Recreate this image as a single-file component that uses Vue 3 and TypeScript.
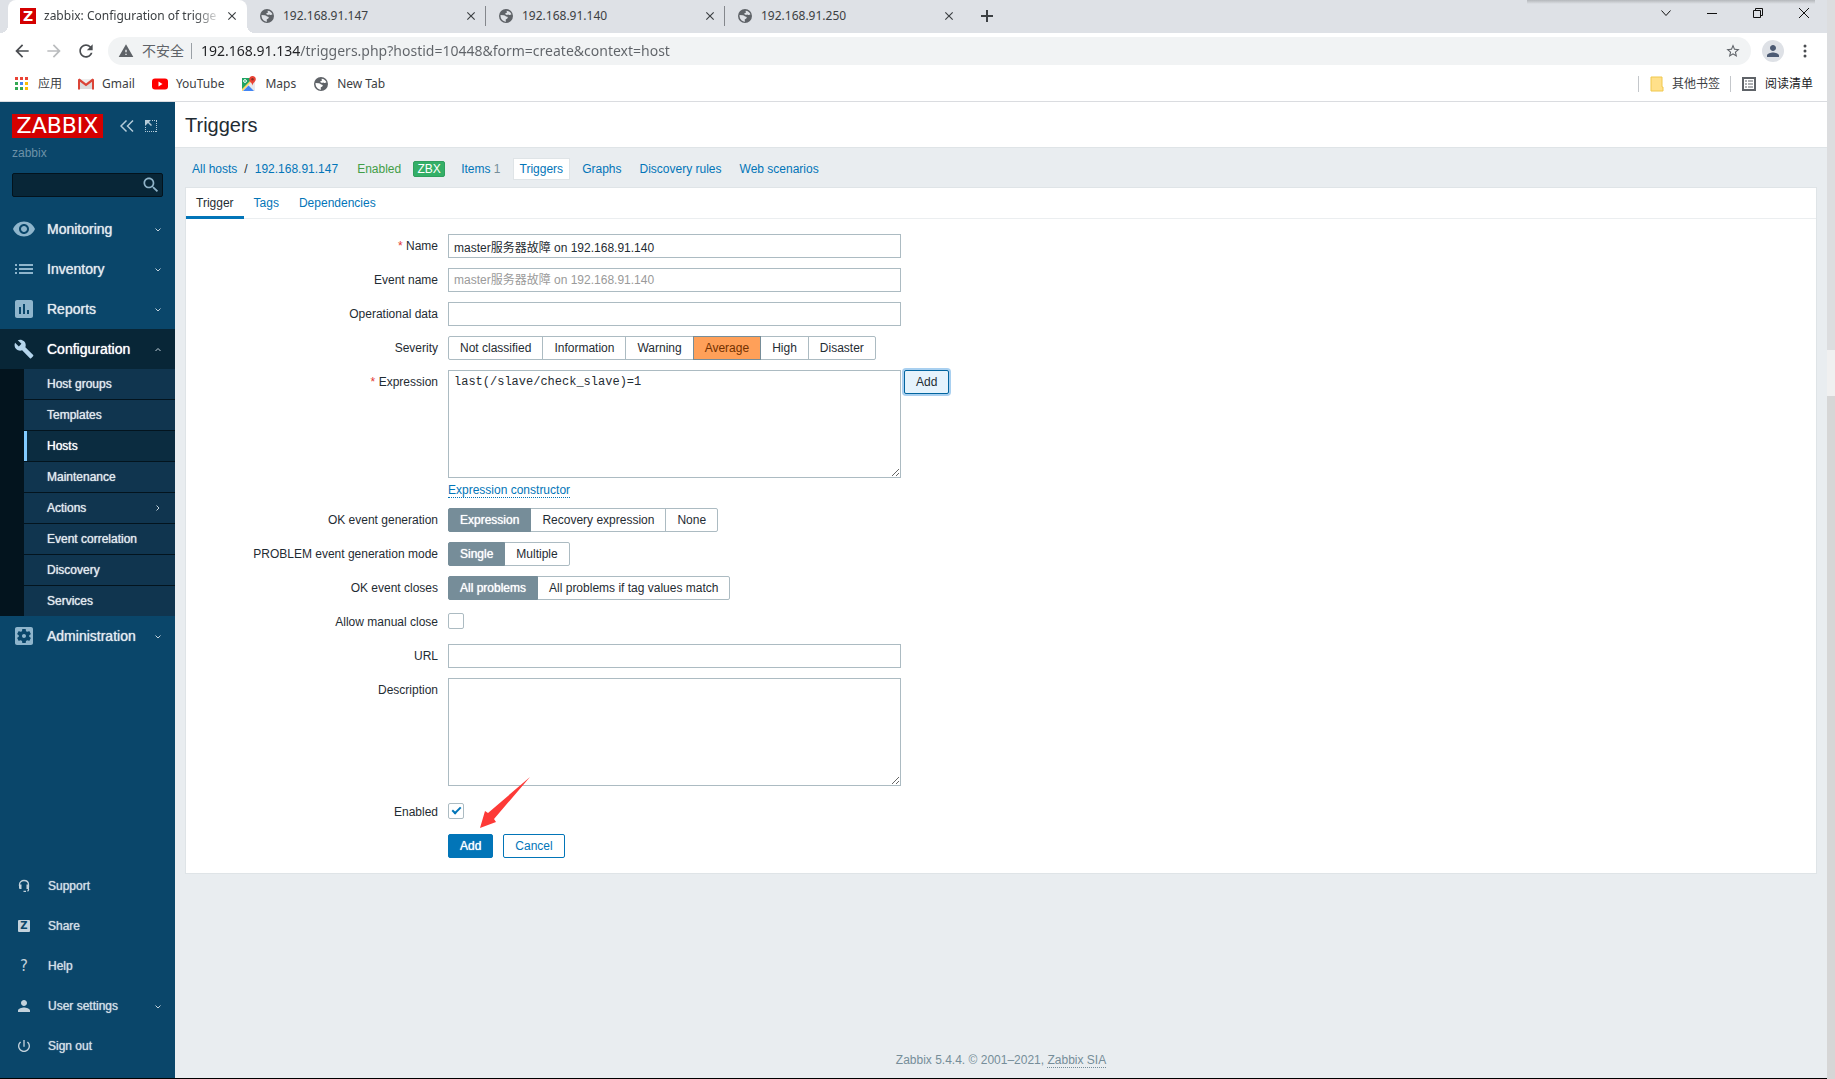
<script setup lang="ts">
import { ref } from 'vue'

const icons: Record<string, string> = {
  eye: 'M12 4.5C7 4.5 2.73 7.61 1 12c1.73 4.39 6 7.5 11 7.5s9.27-3.11 11-7.5c-1.73-4.39-6-7.5-11-7.5zM12 17c-2.76 0-5-2.24-5-5s2.24-5 5-5 5 2.24 5 5-2.24 5-5 5zm0-8c-1.66 0-3 1.34-3 3s1.34 3 3 3 3-1.34 3-3-1.34-3-3-3z',
  list: 'M3 13h2v-2H3v2zm0 4h2v-2H3v2zm0-8h2V7H3v2zm4 4h14v-2H7v2zm0 4h14v-2H7v2zM7 7v2h14V7H7z',
  chart: 'M19 3H5c-1.1 0-2 .9-2 2v14c0 1.1.9 2 2 2h14c1.1 0 2-.9 2-2V5c0-1.1-.9-2-2-2zM9 17H7v-7h2v7zm4 0h-2V7h2v10zm4 0h-2v-4h2v4z',
  wrench: 'M22.7 19l-9.1-9.1c.9-2.3.4-5-1.5-6.9-2-2-5-2.4-7.4-1.3L9 6 6 9 1.6 4.7C.4 7.1.9 10.1 2.9 12.1c1.9 1.9 4.6 2.4 6.9 1.5l9.1 9.1c.4.4 1 .4 1.4 0l2.3-2.3c.5-.4.5-1.1.1-1.4z',
  gear: 'M12 10c-1.1 0-2 .9-2 2s.9 2 2 2 2-.9 2-2-.9-2-2-2zm7-7H5c-1.11 0-2 .9-2 2v14c0 1.1.89 2 2 2h14c1.11 0 2-.9 2-2V5c0-1.1-.89-2-2-2zm-1.75 9c0 .23-.02.46-.05.68l1.48 1.16c.13.11.17.3.08.45l-1.4 2.42c-.09.15-.27.21-.43.15l-1.74-.7c-.36.28-.76.51-1.18.69l-.26 1.85c-.03.17-.18.3-.35.3h-2.8c-.17 0-.32-.13-.35-.29l-.26-1.85c-.43-.18-.82-.41-1.18-.69l-1.74.7c-.16.06-.34 0-.43-.15l-1.4-2.42c-.09-.15-.05-.34.08-.45l1.48-1.16c-.03-.23-.05-.46-.05-.69 0-.23.02-.46.05-.68l-1.48-1.16c-.13-.11-.17-.3-.08-.45l1.4-2.42c.09-.15.27-.21.43-.15l1.74.7c.36-.28.76-.51 1.18-.69l.26-1.85c.03-.17.18-.3.35-.3h2.8c.17 0 .32.13.35.29l.26 1.85c.43.18.82.41 1.18.69l1.74-.7c.16-.06.34 0 .43.15l1.4 2.42c.09.15.05.34-.08.45l-1.48 1.16c.03.23.05.46.05.69z',
  person: 'M12 12c2.21 0 4-1.79 4-4s-1.79-4-4-4-4 1.79-4 4 1.79 4 4 4zm0 2c-2.67 0-8 1.34-8 4v2h16v-2c0-2.66-5.33-4-8-4z',
  power: 'M13 3h-2v10h2V3zm4.83 2.17l-1.42 1.42C17.99 7.86 19 9.81 19 12c0 3.87-3.13 7-7 7s-7-3.13-7-7c0-2.19 1.01-4.14 2.58-5.42L6.17 5.17C4.23 6.82 3 9.26 3 12c0 4.97 4.03 9 9 9s9-4.03 9-9c0-2.74-1.23-5.18-3.17-6.83z',
  globe: 'M12 1.500a10.500 10.500 0 1 0 0 21 10.500 10.500 0 0 0 0-21zM3.800 10.500l5 .5c2 .2 2.200 1.500 3.700 1.700 1.800.2 2.500 1 2 2.300-.6 1.500-2.800 1.200-3 2.600-.2 1.200 1 1.800.2 2.900C7 20 3.500 16 3.800 10.500zM13 4c3.500.2 6.300 2.500 7.200 5.500-1.200.8-3 1.300-4.200.5-1-.7-1.700.5-3 .3-1.500-.3-2.500-1.300-1.800-2.300.6-.8 2-.6 2.200-1.700.1-.8-1-1.300-.4-2.300z',
  close: 'M19 6.41L17.59 5 12 10.59 6.41 5 5 6.41 10.59 12 5 17.59 6.41 19 12 13.41 17.59 19 19 17.59 13.41 12z',
}

interface BrowserTab { title: string; active?: boolean }
const browserTabs: BrowserTab[] = [
  { title: 'zabbix: Configuration of trigge', active: true },
  { title: '192.168.91.147' },
  { title: '192.168.91.140' },
  { title: '192.168.91.250' },
]
const address = ref('192.168.91.134/triggers.php?hostid=10448&form=create&context=host')

const topMenu = [
  { label: 'Monitoring', icon: 'eye' },
  { label: 'Inventory', icon: 'list' },
  { label: 'Reports', icon: 'chart' },
]
const subMenu = ['Host groups', 'Templates', 'Hosts', 'Maintenance', 'Actions', 'Event correlation', 'Discovery', 'Services']

const severities = ['Not classified', 'Information', 'Warning', 'Average', 'High', 'Disaster']
const severity = ref('Average')
const okModes = ['Expression', 'Recovery expression', 'None']
const okMode = ref('Expression')
const problemModes = ['Single', 'Multiple']
const problemMode = ref('Single')
const closeModes = ['All problems', 'All problems if tag values match']
const closeMode = ref('All problems')

const search = ref('')
const name = ref('master服务器故障 on 192.168.91.140')
const eventName = ref('')
const opData = ref('')
const expression = ref('last(/slave/check_slave)=1')
const manualClose = ref(false)
const url = ref('')
const description = ref('')
const enabled = ref(true)
</script>

<template>
  <div class="screen">
    <div class="window">
      <header class="chrome">
        <div class="tabstrip">
          <div v-for="t in browserTabs" :key="t.title" class="btab" :class="{ active: t.active }">
            <span v-if="t.active" class="fav-z">Z</span>
            <svg v-else class="fav" viewBox="0 0 24 24"><path :d="icons.globe" fill-rule="evenodd" /></svg>
            <span class="btitle">{{ t.title }}</span>
            <button class="bare bclose" aria-label="Close tab"><svg viewBox="0 0 24 24"><path :d="icons.close" /></svg></button>
          </div>
          <button class="bare newtab" aria-label="New tab">
            <svg viewBox="0 0 12 12" width="12" height="12"><path d="M5 0h2v5h5v2H7v5H5V7H0V5h5z" fill="#3c4043" /></svg>
          </button>
          <div class="winctl">
            <button class="bare" aria-label="Search tabs"><svg width="12" height="12" viewBox="0 0 12 12"><path d="M1.500 3.500l4.500 5 4.500-5" /></svg></button>
            <button class="bare" aria-label="Minimize"><svg width="12" height="12" viewBox="0 0 12 12"><path d="M1 6.500h10" /></svg></button>
            <button class="bare" aria-label="Restore"><svg width="12" height="12" viewBox="0 0 12 12"><path d="M1.500 3.500h7v7h-7zM3.500 3.500v-2h7v7h-2" /></svg></button>
            <button class="bare" aria-label="Close"><svg width="12" height="12" viewBox="0 0 12 12"><path d="M1 1l10 10M11 1L1 11" /></svg></button>
          </div>
          <div class="topshadow"></div>
        </div>

        <div class="toolbar">
          <button class="bare tool" aria-label="Back"><svg viewBox="0 0 24 24"><path d="M20 11H7.830l5.590-5.590L12 4l-8 8 8 8 1.410-1.410L7.830 13H20v-2z" /></svg></button>
          <button class="bare tool off" aria-label="Forward"><svg viewBox="0 0 24 24"><path d="M12 4l-1.410 1.410L16.170 11H4v2h12.170l-5.580 5.590L12 20l8-8z" /></svg></button>
          <button class="bare tool" aria-label="Reload"><svg viewBox="0 0 24 24"><path d="M17.650 6.350C16.200 4.900 14.210 4 12 4c-4.420 0-7.990 3.580-7.990 8s3.570 8 7.990 8c3.730 0 6.840-2.550 7.730-6h-2.080c-.82 2.330-3.040 4-5.650 4-3.310 0-6-2.690-6-6s2.690-6 6-6c1.660 0 3.140.69 4.220 1.780L13 11h7V4l-2.350 2.350z" /></svg></button>
          <div class="omnibox">
            <svg class="warn" viewBox="0 0 24 24"><path d="M1 21h22L12 2 1 21zm12-3h-2v-2h2v2zm0-4h-2v-4h2v4z" /></svg>
            <span class="insecure">不安全</span>
            <input v-model="address" class="address" type="text" aria-label="Address" />
            <button class="bare star" aria-label="Bookmark"><svg viewBox="0 0 24 24"><path d="M22 9.240l-7.190-.62L12 2 9.190 8.630 2 9.240l5.460 4.730L5.820 21 12 17.270 18.180 21l-1.630-7.030L22 9.240zM12 15.400l-3.760 2.270 1-4.280-3.320-2.880 4.380-.38L12 6.100l1.710 4.040 4.380.38-3.320 2.880 1 4.280L12 15.400z" /></svg></button>
          </div>
          <button class="bare avatar" aria-label="Profile"><svg viewBox="0 0 24 24"><path :d="icons.person" /></svg></button>
          <button class="bare dots" aria-label="Menu"><svg width="4" height="14" viewBox="0 0 4 14"><circle cx="2" cy="2" r="1.500" /><circle cx="2" cy="7" r="1.500" /><circle cx="2" cy="12" r="1.500" /></svg></button>
        </div>

        <nav class="bookmarks">
          <a href="#" class="apps">
            <svg width="14" height="14" viewBox="0 0 14 14">
              <path d="M0 0h3v3H0zM5 0h3v3H5zM10 0h3v3h-3z" fill="#ea4335" />
              <path d="M0 5h3v3H0zM0 10h3v3H0z" fill="#34a853" /><path d="M5 5h3v3H5z" fill="#4285f4" /><path d="M10 5h3v3h-3zM10 10h3v3h-3z" fill="#fbbc04" /><path d="M5 10h3v3H5z" fill="#34a853" />
            </svg>应用</a>
          <a href="#" class="gmail">
            <svg width="16" height="16" viewBox="0 0 16 16"><path d="M1 3h14v10H1z" fill="#eee" /><path d="M2 3l6 5 6-5v10H2z" fill="#dcdcdc" /><path d="M0 3.500L1.500 2.500 8 7.500l6.500-5L16 3.500V13.500h-2V5.800L8 10.300 2 5.800v7.700H0z" fill="#db4437" /></svg>Gmail</a>
          <a href="#" class="youtube">
            <svg width="16" height="16" viewBox="0 0 16 16"><rect y="2.500" width="16" height="11" rx="3" fill="#f00" /><path d="M6.500 5.500v5l4-2.500z" fill="#fff" /></svg>YouTube</a>
          <a href="#" class="maps">
            <svg width="16" height="16" viewBox="0 0 16 16"><path d="M1 2h13v13H1z" fill="#e8eaed" /><path d="M1 2h12L1 14z" fill="#1fa463" /><path d="M2 15l5.500-5.500L13 15z" fill="#4285f4" /><path d="M1 13L12 2h2L1.500 15H1z" fill="#fdd663" /><path d="M11.500 0C9.500 0 8.200 1.500 8.200 3.300c0 2.500 2.800 3.200 3.300 6.200.5-3 3.300-3.700 3.300-6.200C14.800 1.500 13.500 0 11.500 0z" fill="#ea4335" /><circle cx="11.500" cy="3.300" r="1.200" fill="#8c2f26" /><circle cx="4" cy="5" r="1.400" fill="none" stroke="#fff" /></svg>Maps</a>
          <a href="#" class="newt"><svg class="fav" viewBox="0 0 24 24"><path :d="icons.globe" fill-rule="evenodd" /></svg>New Tab</a>
          <span class="grow"></span>
          <a href="#" class="sep folder"><svg width="14" height="16" viewBox="0 0 14 16"><path d="M1 1h11v10h1v4H1z" fill="#ffe08a" stroke="#f0c84c" /></svg>其他书签</a>
          <a href="#" class="sep reading"><svg width="14" height="14" viewBox="0 0 14 14"><rect x="1" y="1" width="12" height="12" fill="none" stroke="#5f6368" stroke-width="2" /><path d="M3 3.500h2v1H3zM6 3.500h5v1H6zM3 6.500h2v1H3zM6 6.500h5v1H6zM3 9.500h2v1H3zM6 9.500h5v1H6z" fill="#5f6368" /></svg>阅读清单</a>
        </nav>
      </header>

      <div class="app">
        <aside class="sidebar">
          <div class="brand">
            <a href="#" class="logo">ZABBIX</a>
            <button class="bare" aria-label="Collapse"><svg width="14" height="14" viewBox="0 0 14 14"><path d="M6.500 1.500L1 7l5.500 5.500M13 1.500L7.500 7l5.500 5.500" fill="none" stroke="#b6ccd9" stroke-width="1.500" /></svg></button>
            <button class="bare kiosk" aria-label="Kiosk mode"><svg width="12" height="12" viewBox="0 0 12 12"><path d="M0 0h6L4 2l3 3-1 1-3-3-3 3z" fill="#b6ccd9" /><path d="M7 .5h5M11.500 1v11M0 11.500h12M.5 7v5" fill="none" stroke="#b6ccd9" stroke-dasharray="1 1" /></svg></button>
          </div>
          <div class="server">zabbix</div>
          <form class="search" @submit.prevent>
            <input v-model="search" type="text" aria-label="Search" />
            <button class="bare" aria-label="Search"><svg width="20" height="20" viewBox="0 0 24 24"><path d="M15.500 14h-.79l-.28-.27C15.410 12.590 16 11.110 16 9.500 16 5.910 13.090 3 9.500 3S3 5.910 3 9.500 5.910 16 9.500 16c1.610 0 3.090-.59 4.230-1.570l.27.28v.79l5 4.990L20.490 19l-4.990-5zm-6 0C7.010 14 5 11.990 5 9.500S7.010 5 9.500 5 14 7.010 14 9.500 11.990 14 9.500 14z" fill="#8fb3c8" /></svg></button>
          </form>

          <nav class="menu">
            <a v-for="m in topMenu" :key="m.label" href="#" class="item">
              <svg class="mi" viewBox="0 0 24 24"><path :d="icons[m.icon]" /></svg><span>{{ m.label }}</span>
              <svg class="chev" viewBox="0 0 8 8"><path d="M1.500 3.500l2.500 2.500 2.500-2.500" /></svg>
            </a>
            <a href="#" class="item open">
              <svg class="mi" viewBox="-2 -2 28 28"><path :d="icons.wrench" /></svg><span>Configuration</span>
              <svg class="chev" viewBox="0 0 8 8"><path d="M1.500 6l2.500-2.500 2.500 2.500" /></svg>
            </a>
            <div class="submenu">
              <a v-for="s in subMenu" :key="s" href="#" :class="{ selected: s === 'Hosts' }">
                <span>{{ s }}</span>
                <svg v-if="s === 'Actions'" class="chev" viewBox="0 0 8 8"><path d="M2.500 1.500l2.500 2.500-2.500 2.500" /></svg>
              </a>
            </div>
            <a href="#" class="item">
              <svg class="mi" viewBox="0 0 24 24"><path :d="icons.gear" /></svg><span>Administration</span>
              <svg class="chev" viewBox="0 0 8 8"><path d="M1.500 3.500l2.500 2.500 2.500-2.500" /></svg>
            </a>
          </nav>

          <nav class="usermenu">
            <a href="#"><svg width="16" height="16" viewBox="0 0 16 16"><path d="M3.500 8V6.800C3.500 4.200 5.500 2.500 8 2.500s4.500 1.700 4.500 4.300V9.500" fill="none" stroke="#c3d2dc" stroke-width="1.300" /><path d="M3 6.500h2.500V11H4.500C3.500 11 3 10.500 3 9.500zM10.500 6.500H13V11h-2.500z" fill="#c3d2dc" /><path d="M12.500 11v.7c0 .7-.5 1.200-1.200 1.200M7.500 13.300h2.500" fill="none" stroke="#c3d2dc" stroke-width="1.300" /></svg><span>Support</span></a>
            <a href="#"><i class="zbox">Z</i><span>Share</span></a>
            <a href="#"><i class="help">?</i><span>Help</span></a>
            <a href="#"><svg width="18" height="18" viewBox="0 0 24 24"><path :d="icons.person" fill="#c3d2dc" /></svg><span>User settings</span><svg class="chev" viewBox="0 0 8 8"><path d="M1.500 3.500l2.500 2.500 2.500-2.500" /></svg></a>
            <a href="#"><svg width="16" height="16" viewBox="0 0 24 24"><path :d="icons.power" fill="#c3d2dc" /></svg><span>Sign out</span></a>
          </nav>
        </aside>

        <main class="main">
          <h1>Triggers</h1>
          <nav class="crumbs">
            <a href="#">All hosts</a><span class="slash">/</span><a href="#">192.168.91.147</a>
            <span class="green">Enabled</span><span class="zbx">ZBX</span>
            <span class="cell"><a href="#">Items</a> <small>1</small></span>
            <a href="#" class="current">Triggers</a>
            <a href="#" class="cell">Graphs</a>
            <a href="#" class="cell">Discovery rules</a>
            <a href="#" class="cell">Web scenarios</a>
          </nav>

          <section class="panel">
            <nav class="tabs">
              <a href="#" class="on">Trigger</a><a href="#">Tags</a><a href="#">Dependencies</a>
            </nav>
            <form class="form" @submit.prevent>
              <label for="name" class="req">Name</label>
              <input id="name" v-model="name" class="text" type="text" />

              <label for="event">Event name</label>
              <input id="event" v-model="eventName" class="text" type="text" placeholder="master服务器故障 on 192.168.91.140" />

              <label for="opdata">Operational data</label>
              <input id="opdata" v-model="opData" class="text" type="text" />

              <span class="lbl">Severity</span>
              <div class="seg" role="radiogroup" aria-label="Severity">
                <label v-for="s in severities" :key="s" :class="{ average: s === severity }"><input v-model="severity" type="radio" name="severity" :value="s" />{{ s }}</label>
              </div>

              <label for="expr" class="req">Expression</label>
              <div class="field">
                <div class="exprline">
                  <textarea id="expr" v-model="expression" class="text mono" spellcheck="false"></textarea>
                  <button type="button" class="btn focused">Add</button>
                </div>
                <a href="#" class="dotted">Expression constructor</a>
              </div>

              <span class="lbl">OK event generation</span>
              <div class="seg" role="radiogroup" aria-label="OK event generation">
                <label v-for="s in okModes" :key="s" :class="{ on: s === okMode }"><input v-model="okMode" type="radio" name="ok" :value="s" />{{ s }}</label>
              </div>

              <span class="lbl">PROBLEM event generation mode</span>
              <div class="seg" role="radiogroup" aria-label="PROBLEM event generation mode">
                <label v-for="s in problemModes" :key="s" :class="{ on: s === problemMode }"><input v-model="problemMode" type="radio" name="problem" :value="s" />{{ s }}</label>
              </div>

              <span class="lbl">OK event closes</span>
              <div class="seg" role="radiogroup" aria-label="OK event closes">
                <label v-for="s in closeModes" :key="s" :class="{ on: s === closeMode }"><input v-model="closeMode" type="radio" name="closes" :value="s" />{{ s }}</label>
              </div>

              <label for="manual">Allow manual close</label>
              <div class="checkrow"><input id="manual" v-model="manualClose" type="checkbox" /></div>

              <label for="url">URL</label>
              <input id="url" v-model="url" class="text" type="text" />

              <label for="desc">Description</label>
              <textarea id="desc" v-model="description" class="text"></textarea>

              <label for="enabled" class="after">Enabled</label>
              <div class="checkrow after"><input id="enabled" v-model="enabled" type="checkbox" /></div>

              <div class="actions">
                <button type="submit" class="btn primary">Add</button>
                <button type="button" class="btn">Cancel</button>
                <svg class="arrow" width="52" height="52" viewBox="0 0 52 52"><path d="M1 51l5-17 3 2L51 0 15 42l2 3z" fill="#fd3a37" /></svg>
              </div>
            </form>
          </section>

          <footer class="footer">Zabbix 5.4.4. © 2001–2021, <a href="#">Zabbix SIA</a></footer>
        </main>
      </div>
    </div>
    <div class="desktop"></div>
  </div>
</template>

<style>
body {
  margin: 0;
}
</style>

<style scoped>
* {
  box-sizing: border-box;
}
a {
  text-decoration: none;
}
.bare {
  border: 0;
  padding: 0;
  background: none;
  display: flex;
  align-items: center;
  justify-content: center;
}
.screen {
  display: flex;
  min-height: 100vh;
  font: 12px/14px "Liberation Sans", Arial, "Noto Sans CJK SC", sans-serif;
  color: #1f2c33;
}
.window {
  flex: 1;
  min-width: 0;
  display: flex;
  flex-direction: column;
  border-bottom: 1px solid #000;
}
.desktop {
  width: 8px;
  background: linear-gradient(#dcdddf 350px, #f0f0f0 350px, #f0f0f0 396px, #d6d6d6 396px);
}

/* browser chrome */
.chrome {
  font: 12px/16px "Noto Sans", "Noto Sans CJK SC", sans-serif;
  color: #3c4043;
  background: #fff;
  border-bottom: 1px solid #dadce0;
}
.tabstrip {
  position: relative;
  display: flex;
  height: 33px;
  padding-left: 8px;
  background: #dee1e6;
}
.btab {
  position: relative;
  width: 239px;
  display: flex;
  align-items: center;
  padding: 0 8px 2px 12px;
  border: 0;
}
.btab:not(.active) + .btab::before {
  content: "";
  position: absolute;
  left: -1px;
  top: 6px;
  width: 1px;
  height: 20px;
  background: #84878c;
}
.btab.active {
  background: #fff;
  border-radius: 8px 8px 0 0;
}
.btab.active::before,
.btab.active::after {
  content: "";
  position: absolute;
  bottom: 0;
  width: 8px;
  height: 8px;
}
.btab.active::before {
  left: -8px;
  background: radial-gradient(circle at 0 0, transparent 8px, #fff 8px);
}
.btab.active::after {
  right: -8px;
  background: radial-gradient(circle at 100% 0, transparent 8px, #fff 8px);
}
.fav {
  width: 16px;
  height: 16px;
  fill: #5f6368;
}
.fav-z {
  width: 16px;
  height: 16px;
  background: #d40000;
  color: #fff;
  font: bold 14px/16px "DejaVu Sans", sans-serif;
  text-align: center;
}
.btitle {
  flex: 1;
  margin-left: 8px;
  white-space: nowrap;
}
.active .btitle {
  mask-image: linear-gradient(90deg, #000 150px, transparent 178px);
}
.bclose {
  width: 14px;
  height: 14px;
}
.bclose svg {
  width: 14px;
  height: 14px;
  fill: #3c4043;
}
.newtab {
  width: 46px;
  padding-bottom: 2px;
}
.winctl {
  margin-left: auto;
  display: flex;
}
.winctl button {
  width: 46px;
  height: 26px;
}
.winctl path {
  fill: none;
  stroke: #111;
}
.topshadow {
  position: absolute;
  top: 0;
  right: 12px;
  width: 288px;
  height: 4px;
  background: linear-gradient(#b4b7bb, #dee1e6);
}
.toolbar {
  display: flex;
  align-items: center;
  height: 36px;
  padding: 0 18px 0 6px;
}
.tool {
  width: 32px;
  height: 28px;
}
.tool svg {
  width: 20px;
  height: 20px;
  fill: #4a4d51;
}
.tool.off svg {
  fill: #babcbe;
}
.omnibox {
  flex: 1;
  display: flex;
  align-items: center;
  height: 28px;
  margin-left: 6px;
  padding: 0 10px;
  border-radius: 14px;
  background: #f1f3f4;
}
.warn {
  width: 16px;
  height: 16px;
  fill: #5f6368;
}
.insecure {
  margin-left: 8px;
  padding-right: 7px;
  border-right: 1px solid #9aa0a6;
  font-size: 14px;
  color: #5f6368;
}
.address {
  flex: 1;
  height: 20px;
  margin: 0 9px;
  padding: 0;
  border: 0;
  outline: 0;
  font: 14px/20px "Noto Sans", sans-serif;
  color: transparent;
  background: linear-gradient(90deg, #202124 99px, #5f6368 99px);
  background-clip: text;
}
.star svg {
  width: 16px;
  height: 16px;
  fill: #5f6368;
}
.avatar {
  width: 22px;
  height: 22px;
  margin-left: 11px;
  border-radius: 11px;
  background: #dee1e6;
}
.avatar svg {
  width: 18px;
  height: 18px;
  fill: #4c5a73;
}
.dots {
  width: 8px;
  margin-left: 17px;
  fill: #4a4d51;
}
.bookmarks {
  display: flex;
  align-items: center;
  height: 32px;
  padding: 0 14px 2px 15px;
}
.bookmarks a {
  display: flex;
  align-items: center;
  gap: 8px;
  margin-right: 17px;
  color: #3c4043;
}
.bookmarks .apps {
  gap: 9px;
  margin-right: 16px;
}
.grow {
  flex: 1;
}
.bookmarks .sep {
  margin-right: 0;
  padding-left: 11px;
  border-left: 1px solid #c4c7cb;
}
.bookmarks .folder {
  margin-right: 10px;
}
.bookmarks .reading {
  gap: 9px;
  color: #202124;
}

/* sidebar */
.app {
  flex: 1;
  display: flex;
}
.sidebar {
  width: 175px;
  display: flex;
  flex-direction: column;
  background: #0a466a;
}
.sidebar a {
  color: #e2eaef;
}
.menu span,
.usermenu span,
.seg .on,
.primary {
  text-shadow: 0 0 1px currentColor;
}
.brand {
  display: flex;
  align-items: center;
  padding: 12px 12px 0;
}
.sidebar .logo {
  width: 91px;
  height: 24px;
  margin-right: 17px;
  background: #d40000;
  color: #fff;
  font: 22px/24px "DejaVu Sans", sans-serif;
  text-align: center;
}
.kiosk {
  margin-left: 11px;
}
.server {
  padding: 8px 12px 0;
  color: #6d92a8;
}
.search {
  display: flex;
  height: 24px;
  margin: 13px 12px 12px;
  padding-right: 1px;
  border: 1px solid #03131d;
  border-radius: 2px;
  background: #082637;
}
.search input {
  flex: 1;
  min-width: 0;
  border: 0;
  outline: 0;
  background: none;
  color: #fff;
}
.item {
  display: flex;
  align-items: center;
  height: 40px;
  padding: 0 13px 0 12px;
  font-size: 14px;
}
.item span,
.usermenu span {
  flex: 1;
  margin-left: 11px;
}
.mi {
  width: 24px;
  height: 24px;
  fill: #8fb5cc;
}
.item.open {
  background: #082637;
  color: #fff;
}
.open .mi {
  fill: #b5d5ec;
}
.chev {
  width: 8px;
  height: 8px;
  fill: none;
  stroke: #c3d2dc;
}
.submenu {
  display: flex;
  flex-direction: column;
  gap: 1px;
  padding-left: 24px;
  background: #03141e;
}
.submenu a {
  display: flex;
  align-items: center;
  height: 30px;
  padding: 0 13px 0 20px;
  border-left: 3px solid #10354f;
  background: #10354f;
}
.submenu a.selected {
  border-color: #82cbff;
  background: #0b2c40;
  color: #fff;
}
.submenu span {
  flex: 1;
}
.usermenu {
  margin-top: auto;
  padding-bottom: 12px;
}
.usermenu a {
  display: grid;
  grid-template-columns: 24px 1fr 8px;
  align-items: center;
  justify-items: center;
  height: 40px;
  padding: 0 13px 0 12px;
  color: #d3dfe6;
}
.usermenu span {
  justify-self: start;
  margin-left: 12px;
}
.zbox {
  width: 12px;
  height: 12px;
  border-radius: 1px;
  background: #c3d2dc;
  color: #0a466a;
  font: bold 10px/12px "DejaVu Sans", sans-serif;
  text-align: center;
}
.help {
  font: 15px/16px "DejaVu Sans", sans-serif;
  color: #c3d2dc;
}

/* content */
.main {
  flex: 1;
  min-width: 0;
  display: flex;
  flex-direction: column;
  background: #e9edf0;
}
h1 {
  height: 46px;
  margin: 0;
  padding: 0 10px;
  border-bottom: 1px solid #dfe4e7;
  background: #fff;
  font-size: 20px;
  line-height: 46px;
  font-weight: normal;
}
.crumbs {
  display: flex;
  align-items: center;
  height: 39px;
  padding: 2px 17px 0;
}
.crumbs a,
.tabs a,
.dotted {
  color: #0275b8;
}
.slash {
  margin: 0 7px;
}
.green {
  margin: 0 12px 0 19px;
  color: #429e47;
}
.zbx {
  width: 32px;
  height: 16px;
  margin-right: 6px;
  border: 1px solid #2f9f5e;
  border-radius: 2px;
  background: #34af67;
  color: #fff;
  line-height: 15px;
  text-align: center;
}
.cell {
  padding: 0 10px;
}
a.cell {
  padding: 0 9px;
}
.cell small {
  font-size: 12px;
  color: #768d99;
}
.crumbs .current {
  margin: 0 3px 0 2px;
  padding: 3px 6px;
  border: 1px solid #dfe4e7;
  background: #fff;
}
.panel {
  margin: 0 10px;
  border: 1px solid #dfe4e7;
  background: #fff;
}
.tabs {
  display: flex;
  height: 31px;
  border-bottom: 1px solid #ebeef0;
}
.tabs a {
  height: 31px;
  padding: 0 10px;
  line-height: 31px;
}
.tabs .on {
  border-bottom: 3px solid #0275b8;
  color: #1f2c33;
}
.form {
  display: grid;
  grid-template-columns: 252px 1fr;
  column-gap: 10px;
  row-gap: 10px;
  padding: 15px 0;
}
.form > label,
.lbl {
  padding-top: 5px;
  text-align: right;
}
.req::before {
  content: "* ";
  color: #e33734;
}
.text {
  width: 453px;
  height: 24px;
  padding: 0 5px;
  border: 1px solid #acbbc2;
  border-radius: 0;
  outline: 0;
  background: #fff;
  color: #1f2c33;
  font: inherit;
}
.text::placeholder {
  color: #9a9a9a;
}
textarea.text {
  display: block;
  height: 108px;
  padding: 4px 5px;
  resize: both;
}
textarea.mono {
  font-family: "Liberation Mono", "Courier New", monospace;
}
.exprline {
  display: flex;
  align-items: flex-start;
  gap: 3px;
}
.dotted {
  display: inline-block;
  margin-top: 5px;
  border-bottom: 1px dotted #0275b8;
}
.field {
  height: 128px;
}
.seg {
  display: flex;
}
.seg label {
  position: relative;
  height: 24px;
  margin-right: -1px;
  padding: 0 11px;
  border: 1px solid #acbbc2;
  line-height: 22px;
}
.seg label:first-child {
  border-radius: 2px 0 0 2px;
}
.seg label:last-child {
  border-radius: 0 2px 2px 0;
}
.seg input {
  position: absolute;
  opacity: 0;
  margin: 0;
}
.seg .on {
  z-index: 1;
  border-color: #768d99;
  background: #768d99;
  color: #fff;
}
.seg .average {
  z-index: 1;
  border-color: #768d99;
  background: #ffa059;
  color: #733100;
}
.checkrow {
  height: 24px;
  padding-top: 3px;
}
.checkrow input {
  appearance: none;
  display: block;
  width: 16px;
  height: 16px;
  margin: 0;
  border: 1px solid #acbbc2;
  border-radius: 2px;
  background: #fff;
}
.checkrow input:checked::before {
  content: "";
  display: block;
  width: 9px;
  height: 5px;
  margin: 3px 0 0 3px;
  box-sizing: border-box;
  border: solid #0275b8;
  border-width: 0 0 2px 2px;
  transform: rotate(-45deg);
}
.form > .after {
  margin-top: 4px;
}
.btn {
  height: 24px;
  padding: 0 11px;
  border: 1px solid #0275b8;
  border-radius: 2px;
  background: #fff;
  color: #0275b8;
  font: inherit;
}
.focused {
  border-color: #02659f;
  background: #e5f3fc;
  color: #1f2c33;
  box-shadow: 0 0 0 2px #a9d0f0;
}
.primary {
  background: #0275b8;
  color: #fff;
}
.actions {
  position: relative;
  grid-column: 2;
  display: flex;
  gap: 10px;
}
.arrow {
  position: absolute;
  left: 31px;
  top: -57px;
}
.footer {
  margin-top: auto;
  padding: 12px 0 11px;
  text-align: center;
  color: #768d99;
}
.footer a {
  border-bottom: 1px dotted #768d99;
  color: #768d99;
}
</style>
